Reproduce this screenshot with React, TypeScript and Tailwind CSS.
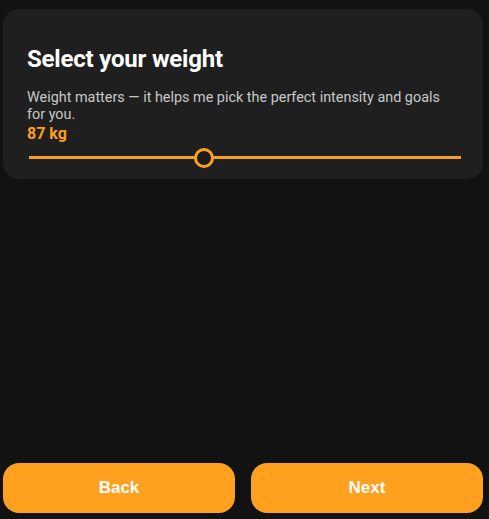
import React from "react";

export default function App() {
  const pct = 40.5;
  return (
    <div className="h-[519px] w-[489px] bg-[#121212] flex flex-col justify-between pt-[9px] pb-[6px] pl-[3px] overflow-hidden">
      <div className="w-[480px] rounded-[16px] bg-[#1f1f1f] px-6 pt-[36px] pb-[11px] [font-family:Roboto,'Liberation_Sans',sans-serif]">
        <h1 className="text-[24px] leading-[28px] font-bold text-white tracking-[-0.2px]">Select your weight</h1>
        <p className="mt-[15.5px] text-[14.4px] leading-[17.75px] text-[#c8c8c8]">
          Weight matters — it helps me pick the perfect intensity and goals for you.
        </p>
        <div className="text-[16px] leading-[20px] font-bold text-[#ff9f1c]">87 kg</div>
        <div className="relative mt-[3.5px] h-5 ml-[2px] -mr-[2px]">
          <div className="absolute left-0 right-0 top-[8.5px] h-[3px] bg-[#f7a028]" />
          <div
            className="absolute top-0 h-5 w-5 -translate-x-1/2 rounded-full border-[3px] border-[#ff9f1c] bg-[#1c1c1c]"
            style={{ left: `${pct}%` }}
          />
        </div>
      </div>
      <div className="w-[480px] grid grid-cols-2 gap-4 [font-family:'Liberation_Sans',Arial,sans-serif]">
        <button className="h-[50px] rounded-[16px] bg-[#ffa01f] text-white text-[17px] font-bold">Back</button>
        <button className="h-[50px] rounded-[16px] bg-[#ffa01f] text-white text-[17px] font-bold">Next</button>
      </div>
    </div>
  );
}
